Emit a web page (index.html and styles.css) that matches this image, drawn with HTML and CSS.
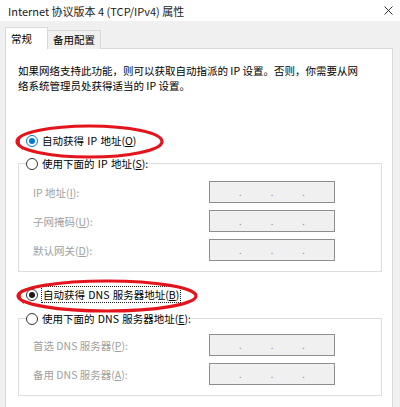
FILE: index.html
```html
<!DOCTYPE html>
<html lang="zh-CN">
<head>
<meta charset="utf-8">
<title>Internet 协议版本 4 (TCP/IPv4) 属性</title>
<link rel="stylesheet" href="styles.css">
</head>
<body>
<div class="window">
  <div class="titlebar">
    <span class="title">Internet 协议版本 4 (TCP/IPv4) 属性</span>
    <svg class="close" width="9" height="9" viewBox="0 0 9 9"><path d="M0.5 0.5L8.5 8.5M8.5 0.5L0.5 8.5" stroke="#333" stroke-width="1" fill="none"/></svg>
  </div>
  <div class="client">
    <div class="tabs">
      <div class="tab active">常规</div>
      <div class="tab">备用配置</div>
    </div>
    <div class="panel">
      <p class="intro">如果网络支持此功能，则可以获取自动指派的 IP 设置。否则，你需要从网<br>络系统管理员处获得适当的 IP 设置。</p>

      <div class="radio-row first-auto">
        <span class="radio checked blue"></span>
        <span class="rlabel">自动获得 IP 地址(<u>O</u>)</span>
      </div>

      <fieldset class="group ip-group">
        <legend class="radio-row">
          <span class="radio"></span>
          <span class="rlabel">使用下面的 IP 地址(<u>S</u>):</span>
        </legend>
        <div class="fields">
          <div class="field"><span class="flabel">IP 地址(<u>I</u>):</span><div class="ipbox"><span>.</span><span>.</span><span>.</span></div></div>
          <div class="field"><span class="flabel">子网掩码(<u>U</u>):</span><div class="ipbox"><span>.</span><span>.</span><span>.</span></div></div>
          <div class="field"><span class="flabel">默认网关(<u>D</u>):</span><div class="ipbox"><span>.</span><span>.</span><span>.</span></div></div>
        </div>
      </fieldset>

      <div class="radio-row dns-auto">
        <span class="radio checked"></span>
        <span class="rlabel focused">自动获得 DNS 服务器地址(<u>B</u>)</span>
      </div>

      <fieldset class="group dns-group">
        <legend class="radio-row">
          <span class="radio"></span>
          <span class="rlabel">使用下面的 DNS 服务器地址(<u>E</u>):</span>
        </legend>
        <div class="fields">
          <div class="field"><span class="flabel">首选 DNS 服务器(<u>P</u>):</span><div class="ipbox"><span>.</span><span>.</span><span>.</span></div></div>
          <div class="field"><span class="flabel">备用 DNS 服务器(<u>A</u>):</span><div class="ipbox"><span>.</span><span>.</span><span>.</span></div></div>
        </div>
      </fieldset>

      <svg class="mark mark-ip" width="149" height="35" viewBox="0 0 149 35"><ellipse cx="74.5" cy="17.5" rx="72.5" ry="15.5" fill="none" stroke="#e3141c" stroke-width="3.2"/><path d="M6 12 C 3 16, 3 21, 8 25" fill="none" stroke="#e3141c" stroke-width="2"/></svg>
      <svg class="mark mark-dns" width="182" height="34" viewBox="0 0 182 34"><ellipse cx="91" cy="17" rx="89" ry="15" fill="none" stroke="#e3141c" stroke-width="3.2"/><path d="M6 11 C 3 15, 3 20, 8 24" fill="none" stroke="#e3141c" stroke-width="2"/></svg>
    </div>
  </div>
</div>
</body>
</html>
```

FILE: styles.css
```css
* {
  box-sizing: border-box;
}

html,
body {
  margin: 0;
  height: 100%;
}

body {
  background: #f0f0f0;
  font-family: "Noto Sans CJK SC", "Noto Sans", sans-serif;
  font-size: 10.5px;
  color: #000;
  overflow: hidden;
}

.window {
  height: 407px;
  display: flex;
  flex-direction: column;
}

.titlebar {
  height: 21px;
  flex: none;
  background: #fff;
  display: flex;
  align-items: center;
  justify-content: space-between;
  padding: 0 7px 0 8px;
}

.title {
  color: #1a1a1a;
  font-size: 11px;
  line-height: 14px;
}

.close {
  display: block;
}

.client {
  flex: 1;
  display: flex;
  flex-direction: column;
  padding: 6px 7px 0 5px;
}

.tabs {
  display: flex;
  align-items: flex-end;
  height: 22px;
  margin-bottom: -1px;
  position: relative;
  z-index: 1;
}

.tab {
  height: 19px;
  padding: 0 5px;
  background: #f0f0f0;
  border: 1px solid #d9d9d9;
  border-left: none;
  border-bottom: none;
  display: flex;
  align-items: center;
  line-height: 14px;
}

.tab.active {
  width: 43px;
  height: 22px;
  background: #fff;
  border-left: 1px solid #d9d9d9;
}

.panel {
  flex: 1;
  position: relative;
  background: #fff;
  border: 1px solid #d9d9d9;
  border-bottom: none;
  padding: 14px 10px 0 12px;
}

.intro {
  margin: 0;
  line-height: 15px;
}

.radio-row {
  display: flex;
  align-items: center;
  height: 15px;
  gap: 4px;
  line-height: 15px;
}

.rlabel {
  word-spacing: 1px;
}

.first-auto {
  margin: 40px 0 0 8px;
}

.dns-auto {
  margin: 15px 0 0 8px;
}

.radio {
  width: 12px;
  height: 12px;
  border: 1px solid #333;
  border-radius: 50%;
  background: #fff;
  display: flex;
  align-items: center;
  justify-content: center;
  flex: none;
}

.radio.checked::after {
  content: "";
  width: 6px;
  height: 6px;
  border-radius: 50%;
  background: #1a1a1a;
}

.radio.blue {
  border-color: #0078d7;
}

.radio.blue::after {
  background: #0078d7;
}

.rlabel u,
.flabel u {
  text-decoration-thickness: 1px;
  text-underline-offset: 1px;
}

.focused {
  outline: 1px dotted #222;
  outline-offset: 0;
  padding: 0 1px;
}

.group {
  margin: 0;
  min-width: 0;
  border: 1px solid #dcdcdc;
  padding: 10px 0 10px 7px;
}

.ip-group {
  margin-top: 8px;
}

.dns-group {
  margin-top: 9px;
  padding-top: 8px;
}

.group legend {
  padding: 0 1px 0 0;
}

.fields {
  display: flex;
  flex-direction: column;
  gap: 7px;
  padding-left: 7px;
}

.field {
  display: flex;
  align-items: center;
  height: 22px;
}

.flabel {
  width: 176px;
  color: #a0a0a0;
}

.ipbox {
  width: 126px;
  height: 22px;
  border: 1px solid #8e8e8e;
  background: #f0f0f0;
  display: flex;
  justify-content: space-evenly;
  align-items: center;
  color: #8a8a8a;
  font-size: 9px;
  line-height: 10px;
  padding-top: 2px;
}

.mark {
  position: absolute;
  pointer-events: none;
}

.mark-ip {
  left: 9px;
  top: 75px;
}

.mark-dns {
  left: 10px;
  top: 230px;
}
```
